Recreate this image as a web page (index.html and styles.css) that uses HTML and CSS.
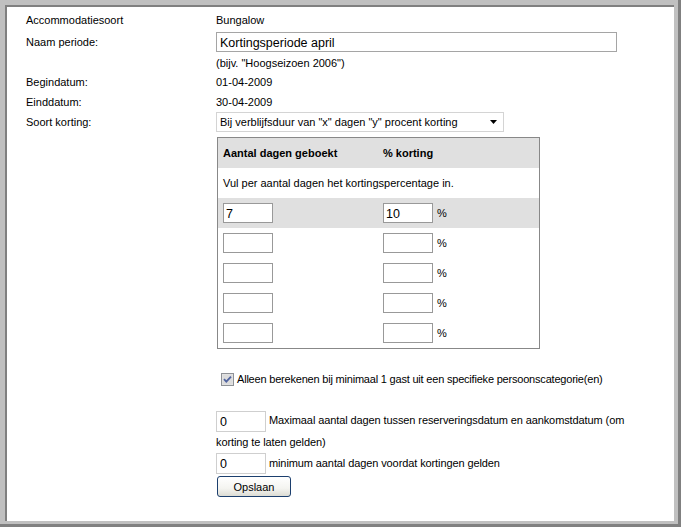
FILE: index.html
```html
<!DOCTYPE html>
<html>
<head>
<meta charset="utf-8">
<link rel="stylesheet" href="styles.css">
</head>
<body>
<div class="frame">
  <div class="panel">
    <div class="form">
      <div class="row r1"><span class="label">Accommodatiesoort</span><span class="value">Bungalow</span></div>
      <div class="row r2"><span class="label">Naam periode:</span><span class="value"><input class="name-input" type="text" value="Kortingsperiode april"></span></div>
      <div class="row r3"><span class="label"></span><span class="value">(bijv. "Hoogseizoen 2006")</span></div>
      <div class="row r4"><span class="label">Begindatum:</span><span class="value">01-04-2009</span></div>
      <div class="row r5"><span class="label">Einddatum:</span><span class="value">30-04-2009</span></div>
      <div class="row r6"><span class="label">Soort korting:</span>
        <span class="value"><span class="select"><span class="select-text">Bij verblijfsduur van "x" dagen "y" procent korting</span><svg class="arrow" width="7" height="4" viewBox="0 0 7 4"><path d="M0 0H7L3.5 4Z" fill="#000"/></svg></span></span>
      </div>

      <div class="value-block">
        <div class="discount">
          <div class="drow head"><span class="c1">Aantal dagen geboekt</span><span class="c2">% korting</span></div>
          <div class="drow note"><span class="full">Vul per aantal dagen het kortingspercentage in.</span></div>
          <div class="drow alt"><span class="c1"><input class="small" type="text" value="7"></span><span class="c2"><input class="small" type="text" value="10"><span class="pct">%</span></span></div>
          <div class="drow"><span class="c1"><input class="small" type="text"></span><span class="c2"><input class="small" type="text"><span class="pct">%</span></span></div>
          <div class="drow"><span class="c1"><input class="small" type="text"></span><span class="c2"><input class="small" type="text"><span class="pct">%</span></span></div>
          <div class="drow"><span class="c1"><input class="small" type="text"></span><span class="c2"><input class="small" type="text"><span class="pct">%</span></span></div>
          <div class="drow"><span class="c1"><input class="small" type="text"></span><span class="c2"><input class="small" type="text"><span class="pct">%</span></span></div>
        </div>

        <div class="check-row">
          <svg class="checkbox" width="13" height="13" viewBox="0 0 13 13">
            <rect x="0.5" y="0.5" width="12" height="12" fill="#e6e6e6" stroke="#8e9196"/>
            <rect x="1.5" y="1.5" width="10" height="10" fill="#dcdcdc"/>
            <path d="M3 6.2L5.3 8.6L10 3.6" fill="none" stroke="#5064a0" stroke-width="1.8"/>
          </svg>
          <span class="check-text">Alleen berekenen bij minimaal 1 gast uit een specifieke persoonscategorie(en)</span>
        </div>

        <p class="line first"><input class="zero" type="text" value="0"> Maximaal aantal dagen tussen reserveringsdatum en aankomstdatum (om korting te laten gelden)</p>
        <p class="line"><input class="zero" type="text" value="0"> minimum aantal dagen voordat kortingen gelden</p>
        <button class="save" type="button">Opslaan</button>
      </div>
    </div>
  </div>
</div>
</body>
</html>
```

FILE: styles.css
```css
html, body {
  margin: 0;
  padding: 0;
  background: #c0c0c0;
}

body {
  font-family: "Liberation Sans", Arial, sans-serif;
  font-size: 11px;
  color: #000;
}

.frame {
  width: 681px;
  height: 527px;
  box-sizing: border-box;
  background: #c0c0c0;
  padding: 5px 4px 3px 5px;
  border-right: 3px solid #808080;
  border-bottom: 3px solid #808080;
}

.panel {
  height: 100%;
  box-sizing: border-box;
  background: #fff;
  border-top: 2px solid #808080;
  border-left: 2px solid #808080;
  padding: 2px 20px 0 19px;
}

.row {
  display: grid;
  grid-template-columns: 190px 1fr;
  align-items: center;
}

.r1 { height: 22px; }
.r2 { height: 22px; }
.r3 { height: 19px; }
.r4 { height: 20px; }
.r5 { height: 19px; }
.r6 { height: 22px; }

.label, .value {
  white-space: nowrap;
}

.value { display: flex; align-items: center; }

.name-input {
  box-sizing: border-box;
  width: 401px;
  height: 20px;
  margin: 0;
  padding: 1px 3px 0;
  border: 1px solid #a5a5a5;
  font-family: "Liberation Sans", Arial, sans-serif;
  font-size: 12.5px;
  color: #000;
  outline: none;
}

.select {
  box-sizing: border-box;
  width: 288px;
  height: 20px;
  display: flex;
  align-items: center;
  justify-content: space-between;
  border: 1px solid #d4d4d4;
  padding: 0 6px 0 3px;
  background: #fff;
}

.arrow { display: block; }

.value-block {
  margin-left: 190px;
}

.discount {
  margin-top: 4px;
  margin-left: 1px;
  width: 323px;
  box-sizing: border-box;
  border: 1px solid #888;
}

.drow {
  height: 30px;
  display: grid;
  grid-template-columns: 160px 1fr;
  align-items: center;
}

.drow .c1 { padding-left: 5px; display: flex; align-items: center; }
.drow .c2 { padding-left: 5px; display: flex; align-items: center; }

.drow.head {
  background: #e0e0e0;
  font-weight: bold;
}

.drow.note { display: flex; padding-left: 5px; }

.drow.alt { background: #e0e0e0; }

input.small {
  box-sizing: border-box;
  width: 50px;
  height: 20px;
  margin: 0;
  padding: 1px 2px 0;
  border: 1px solid #999;
  background: #fff;
  font-family: "Liberation Sans", Arial, sans-serif;
  font-size: 12.5px;
  color: #000;
  outline: none;
}

.pct { margin-left: 4px; }

.check-row {
  margin-top: 22px;
  margin-left: 5px;
  display: flex;
  align-items: center;
  gap: 3px;
  height: 16px;
}

.check-text { letter-spacing: -0.2px; }

.checkbox { display: block; }

.line {
  margin: 0;
  line-height: 21px;
  width: 438px;
  letter-spacing: -0.1px;
}

.line.first { margin-top: 23px; }

input.zero {
  box-sizing: border-box;
  width: 50px;
  height: 21px;
  margin: 0;
  padding: 1px 3px 0;
  border: 1px solid #cfcfcf;
  vertical-align: middle;
  font-family: "Liberation Sans", Arial, sans-serif;
  font-size: 12.5px;
  letter-spacing: 0;
  color: #000;
  outline: none;
}

.save {
  margin-top: 2px;
  margin-left: 1px;
  width: 74px;
  height: 21px;
  padding: 0;
  border: 1px solid #1c3f6e;
  border-radius: 3px;
  background: linear-gradient(#ffffff, #f4f4f0 60%, #dcdcd4);
  font-family: "Liberation Sans", Arial, sans-serif;
  font-size: 11px;
  color: #000;
}
```
